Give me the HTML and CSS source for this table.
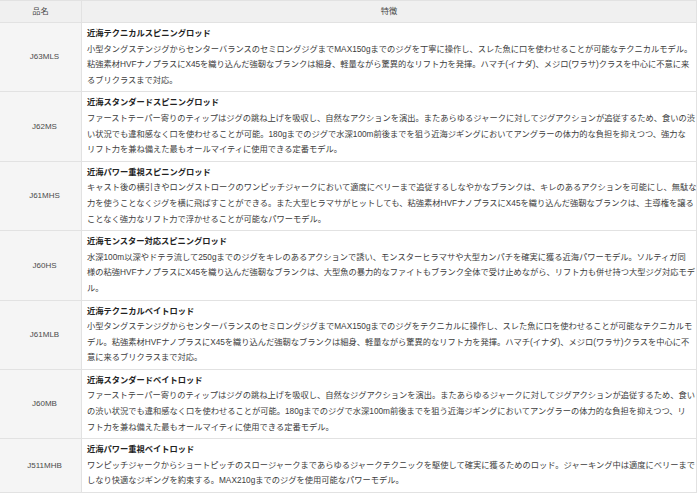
FILE: index.html
```html
<!DOCTYPE html>
<html lang="ja">
<head>
<meta charset="utf-8">
<link rel="stylesheet" href="styles.css">
</head>
<body>
<table class="spec">
  <thead>
    <tr><th class="name-col">品名</th><th class="feat-col">特徴</th></tr>
  </thead>
  <tbody>
    <tr>
      <td class="model">J63MLS</td>
      <td class="desc"><div class="ttl">近海テクニカルスピニングロッド</div>
        <div class="ln">小型タングステンジグからセンターバランスのセミロングジグまでMAX150gまでのジグを丁寧に操作し、スレた魚に口を使わせることが可能なテクニカルモデル。</div>
        <div class="ln">粘強素材HVFナノプラスにX45を織り込んだ強靭なブランクは細身、軽量ながら驚異的なリフト力を発揮。ハマチ(イナダ)、メジロ(ワラサ)クラスを中心に不意に来</div>
        <div class="ln">るブリクラスまで対応。</div></td>
    </tr>
    <tr>
      <td class="model">J62MS</td>
      <td class="desc"><div class="ttl">近海スタンダードスピニングロッド</div>
        <div class="ln">ファーストテーパー寄りのティップはジグの跳ね上げを吸収し、自然なアクションを演出。またあらゆるジャークに対してジグアクションが追従するため、食いの渋</div>
        <div class="ln">い状況でも違和感なく口を使わせることが可能。180gまでのジグで水深100m前後までを狙う近海ジギングにおいてアングラーの体力的な負担を抑えつつ、強力な</div>
        <div class="ln">リフト力を兼ね備えた最もオールマイティに使用できる定番モデル。</div></td>
    </tr>
    <tr>
      <td class="model">J61MHS</td>
      <td class="desc"><div class="ttl">近海パワー重視スピニングロッド</div>
        <div class="ln">キャスト後の横引きやロングストロークのワンピッチジャークにおいて適度にベリーまで追従するしなやかなブランクは、キレのあるアクションを可能にし、無駄な</div>
        <div class="ln">力を使うことなくジグを横に飛ばすことができる。また大型ヒラマサがヒットしても、粘強素材HVFナノプラスにX45を織り込んだ強靭なブランクは、主導権を譲る</div>
        <div class="ln">ことなく強力なリフト力で浮かせることが可能なパワーモデル。</div></td>
    </tr>
    <tr>
      <td class="model">J60HS</td>
      <td class="desc"><div class="ttl">近海モンスター対応スピニングロッド</div>
        <div class="ln">水深100m以深やドテラ流して250gまでのジグをキレのあるアクションで誘い、モンスターヒラマサや大型カンパチを確実に獲る近海パワーモデル。ソルティガ同</div>
        <div class="ln">様の粘強HVFナノプラスにX45を織り込んだ強靭なブランクは、大型魚の暴力的なファイトもブランク全体で受け止めながら、リフト力も併せ持つ大型ジグ対応モデ</div>
        <div class="ln">ル。</div></td>
    </tr>
    <tr>
      <td class="model">J61MLB</td>
      <td class="desc"><div class="ttl">近海テクニカルベイトロッド</div>
        <div class="ln">小型タングステンジグからセンターバランスのセミロングジグまでMAX150gまでのジグをテクニカルに操作し、スレた魚に口を使わせることが可能なテクニカルモ</div>
        <div class="ln">デル。粘強素材HVFナノプラスにX45を織り込んだ強靭なブランクは細身、軽量ながら驚異的なリフト力を発揮。ハマチ(イナダ)、メジロ(ワラサ)クラスを中心に不</div>
        <div class="ln">意に来るブリクラスまで対応。</div></td>
    </tr>
    <tr>
      <td class="model">J60MB</td>
      <td class="desc"><div class="ttl">近海スタンダードベイトロッド</div>
        <div class="ln">ファーストテーパー寄りのティップはジグの跳ね上げを吸収し、自然なジグアクションを演出。またあらゆるジャークに対してジグアクションが追従するため、食い</div>
        <div class="ln">の渋い状況でも違和感なく口を使わせることが可能。180gまでのジグで水深100m前後までを狙う近海ジギングにおいてアングラーの体力的な負担を抑えつつ、リ</div>
        <div class="ln">フト力を兼ね備えた最もオールマイティに使用できる定番モデル。</div></td>
    </tr>
    <tr>
      <td class="model">J511MHB</td>
      <td class="desc"><div class="ttl">近海パワー重視ベイトロッド</div>
        <div class="ln">ワンピッチジャークからショートピッチのスロージャークまであらゆるジャークテクニックを駆使して確実に獲るためのロッド。ジャーキング中は適度にベリーまで</div>
        <div class="ln">しなり快適なジギングを約束する。MAX210gまでのジグを使用可能なパワーモデル。</div></td>
    </tr>
  </tbody>
</table>
</body>
</html>
```

FILE: styles.css
```css
html, body {
  margin: 0;
  padding: 0;
  background: #ffffff;
}

body {
  font-family: "Liberation Sans", "Noto Sans CJK JP", sans-serif;
  color: #3c3c3c;
  font-size: 8.25px;
  line-height: 15.6px;
}

.spec {
  width: 697px;
  border-collapse: collapse;
  table-layout: fixed;
}

.spec th {
  height: 21px;
  padding: 0;
  font-weight: normal;
  text-align: center;
  background: #f0f0f0;
  border: 1px solid #e2e2e2;
  border-left: none;
  color: #4a4a4a;
}

.name-col {
  width: 81px;
}

.spec td {
  border: 1px solid #e2e2e2;
  border-left: none;
}

.model {
  background: #f5f5f5;
  text-align: center;
  vertical-align: middle;
  padding: 0 0 0 8px;
  font-size: 8px;
  color: #4a4a4a;
}

.desc {
  padding: 3px 4px 3px 5px;
  vertical-align: top;
}

.ttl {
  font-weight: bold;
  color: #222;
  white-space: nowrap;
}

.ln {
  white-space: nowrap;
}
```
